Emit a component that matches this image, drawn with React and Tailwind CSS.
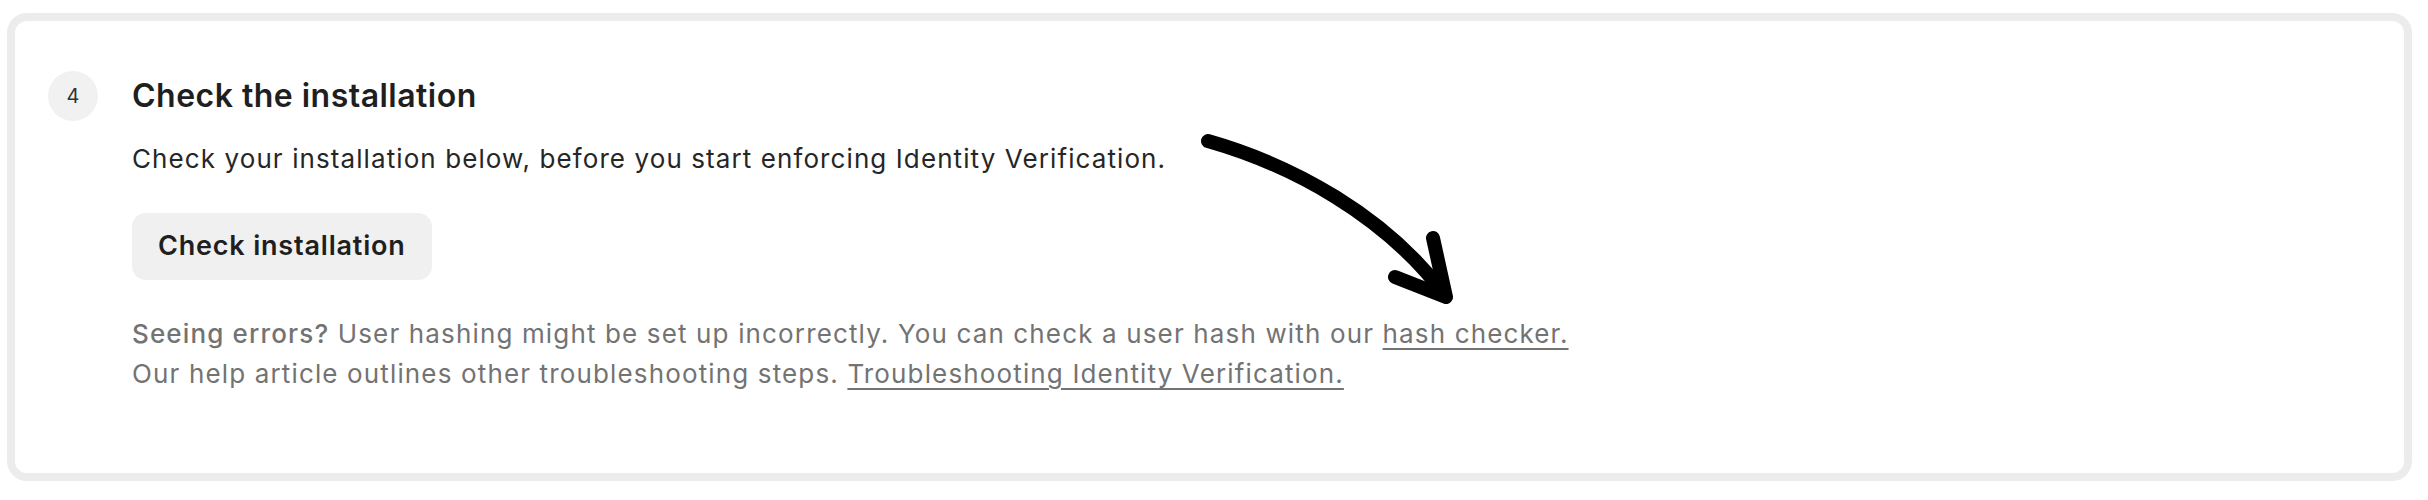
import React from "react";

function Arrow() {
  // hand-drawn arrow pointing at the hash checker link
  return (
    <svg
      className="pointer-events-none absolute left-[1165px] top-[99px]"
      width="300"
      height="200"
      viewBox="1180 120 300 200"
      fill="none"
    >
      <path
        d="M1208 141 C 1292 165, 1385 215, 1445 295"
        stroke="#000"
        strokeWidth="14"
        strokeLinecap="round"
      />
      <path
        d="M1395 277 L1446 297 L1433 238"
        stroke="#000"
        strokeWidth="14"
        strokeLinecap="round"
        strokeLinejoin="round"
      />
    </svg>
  );
}

export default function App() {
  return (
    <div className="min-h-[500px] bg-white pl-[7px] pr-[16px] pt-[13px] font-['Inter',sans-serif]">
      <div className="relative h-[468px] rounded-[20px] border-[8px] border-[#ececec] bg-white pl-[33px] pt-[50px]">
        <div className="flex gap-[34px]">
          <div className="flex h-[50px] w-[50px] shrink-0 items-center justify-center rounded-full bg-[#f1f1f1] text-[20px] text-[#333]">
            4
          </div>
          <div className="flex flex-col">
            <h2 className="flex h-[50px] items-center text-[32px] font-semibold tracking-[0.015em] text-[#1f1f1f]">
              Check the installation
            </h2>
            <p className="mt-[20px] text-[26px] leading-[36px] tracking-[0.042em] text-[#262626]">
              Check your installation below, before you start enforcing Identity Verification.
            </p>
            <div className="mt-[36px]">
              <button className="flex h-[67px] items-center rounded-[14px] bg-[#f0f0f0] px-[26px] text-[27px] font-semibold tracking-[0.03em] text-[#1f1f1f]">
                Check installation
              </button>
            </div>
            <div className="mt-[34px] text-[26px] leading-[40px] tracking-[0.044em] text-[#737373]">
              <p>
                <span className="font-medium">Seeing errors?</span> User hashing might be set up
                incorrectly. You can check a user hash with our{" "}
                <a href="#" className="underline underline-offset-[5px]">
                  hash checker.
                </a>
              </p>
              <p>
                Our help article outlines other troubleshooting steps.{" "}
                <a href="#" className="underline underline-offset-[5px]">
                  Troubleshooting Identity Verification.
                </a>
              </p>
            </div>
          </div>
        </div>
        <Arrow />
      </div>
    </div>
  );
}
